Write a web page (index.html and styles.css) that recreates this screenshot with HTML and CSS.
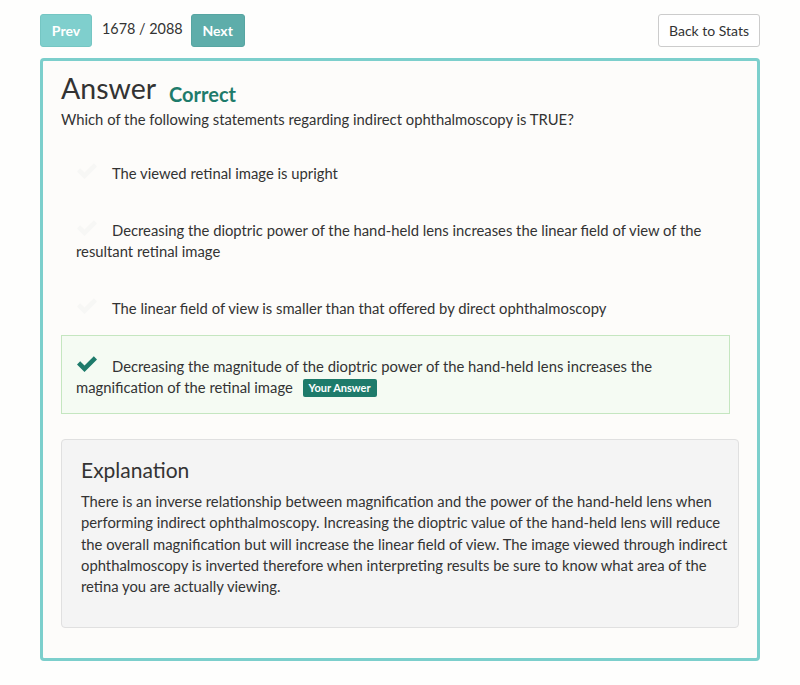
FILE: index.html
```html
<!DOCTYPE html>
<html>
<head>
<meta charset="utf-8">
<link rel="stylesheet" href="styles.css">
</head>
<body>
<div class="page">
  <div class="topbar">
    <div class="nav">
      <button class="btn btn-prev">Prev</button>
      <span class="counter">1678 / 2088</span>
      <button class="btn btn-next">Next</button>
    </div>
    <button class="btn btn-back">Back to Stats</button>
  </div>
  <div class="card">
    <div class="title-row">
      <h1 class="title">Answer</h1>
      <span class="status">Correct</span>
    </div>
    <p class="question">Which of the following statements regarding indirect ophthalmoscopy is TRUE?</p>
    <div class="options">
      <div class="option"><span class="icon faint"><svg viewBox="0 0 22 17" width="22" height="17"><path d="M1 9.5 L4.2 6.3 L8.5 10.6 L17.8 1.3 L21 4.5 L8.5 17 Z" /></svg></span>The viewed retinal image is upright</div>
      <div class="option"><span class="icon faint"><svg viewBox="0 0 22 17" width="22" height="17"><path d="M1 9.5 L4.2 6.3 L8.5 10.6 L17.8 1.3 L21 4.5 L8.5 17 Z" /></svg></span>Decreasing the dioptric power of the hand-held lens increases the linear field of view of the resultant retinal image</div>
      <div class="option"><span class="icon faint"><svg viewBox="0 0 22 17" width="22" height="17"><path d="M1 9.5 L4.2 6.3 L8.5 10.6 L17.8 1.3 L21 4.5 L8.5 17 Z" /></svg></span>The linear field of view is smaller than that offered by direct ophthalmoscopy</div>
      <div class="option correct"><span class="icon"><svg viewBox="0 0 22 17" width="22" height="17"><path d="M1 9.5 L4.2 6.3 L8.5 10.6 L17.8 1.3 L21 4.5 L8.5 17 Z" /></svg></span>Decreasing the magnitude of the dioptric power of the hand-held lens increases the magnification of the retinal image <span class="badge">Your Answer</span></div>
    </div>
    <div class="explanation">
      <h2 class="exp-title">Explanation</h2>
      <p class="exp-text">There is an inverse relationship between magnification and the power of the hand-held lens when performing indirect ophthalmoscopy. Increasing the dioptric value of the hand-held lens will reduce the overall magnification but will increase the linear field of view. The image viewed through indirect ophthalmoscopy is inverted therefore when interpreting results be sure to know what area of the retina you are actually viewing.</p>
    </div>
  </div>
</div>
</body>
</html>
```

FILE: styles.css
```css
html, body {
  margin: 0;
  padding: 0;
  background: #fefefd;
}
body {
  font-family: Lato, "Open Sans", "Liberation Sans", sans-serif;
  color: #333;
  font-size: 14.8px;
}
.page {
  padding: 14px 40px 0 40px;
}
.topbar {
  display: flex;
  justify-content: space-between;
  align-items: center;
  margin-bottom: 11px;
}
.nav {
  display: flex;
  align-items: center;
}
.btn {
  font-family: inherit;
  height: 33px;
  border-radius: 3px;
  font-size: 14px;
  padding: 0 12px;
  cursor: pointer;
}
.btn-prev {
  background: #7fcfcd;
  border: 1px solid #75c6c3;
  color: #fff;
  font-weight: 700;
  width: 52px;
  padding: 0;
}
.btn-next {
  background: #5eadaa;
  border: 1px solid #57a5a2;
  color: #fff;
  font-weight: 700;
  width: 54px;
  padding: 0;
}
.counter {
  font-size: 14.4px;
  color: #333;
  margin: 0 8px 0 10px;
  position: relative;
  top: -2px;
}
.btn-back {
  background: #fff;
  border: 1px solid #ccc;
  color: #333;
  width: 102px;
  padding: 0;
  font-size: 14px;
}
.card {
  border: 3px solid #7ccfcc;
  border-radius: 4px;
  background: #fdfcfa;
  padding: 10px 18px 30px 18px;
}
.title-row {
  display: flex;
  align-items: baseline;
  gap: 13px;
}
.title {
  font-size: 28.5px;
  font-weight: 400;
  margin: 0;
  line-height: 34px;
  color: #333;
}
.status {
  font-size: 20px;
  font-weight: 700;
  color: #1e7b6b;
  position: relative;
  top: 3px;
}
.question {
  margin: 4px 0 13px 0;
  line-height: 21px;
}
.options {
  margin-right: 9px;
}
.option {
  border: 1px solid transparent;
  padding: 18px 15px 15px 14px;
  line-height: 21px;
}
.icon {
  display: inline-block;
  width: 22px;
  margin-right: 14px;
  vertical-align: 0px;
}
.icon svg {
  display: block;
  fill: #1e7b6b;
}
.icon.faint svg {
  fill: #f7f7f5;
}
.option.correct {
  background: #f5fbf3;
  border-color: #c5e6c0;
  padding-top: 19px;
  padding-bottom: 15px;
}
.badge {
  display: inline-block;
  background: #1e7b6b;
  color: #fff;
  font-size: 11px;
  font-weight: 700;
  line-height: 18px;
  padding: 0 6px;
  border-radius: 2px;
  margin-left: 6px;
  vertical-align: 1px;
}
.explanation {
  margin-top: 25px;
  background: #f4f4f4;
  border: 1px solid #e0e0e0;
  border-radius: 4px;
  padding: 16px 6px 30px 19px;
}
.exp-title {
  font-size: 21px;
  font-weight: 400;
  margin: 0 0 7px 0;
  line-height: 28px;
  color: #333;
}
.exp-text {
  margin: 0;
  line-height: 21.3px;
}
```
